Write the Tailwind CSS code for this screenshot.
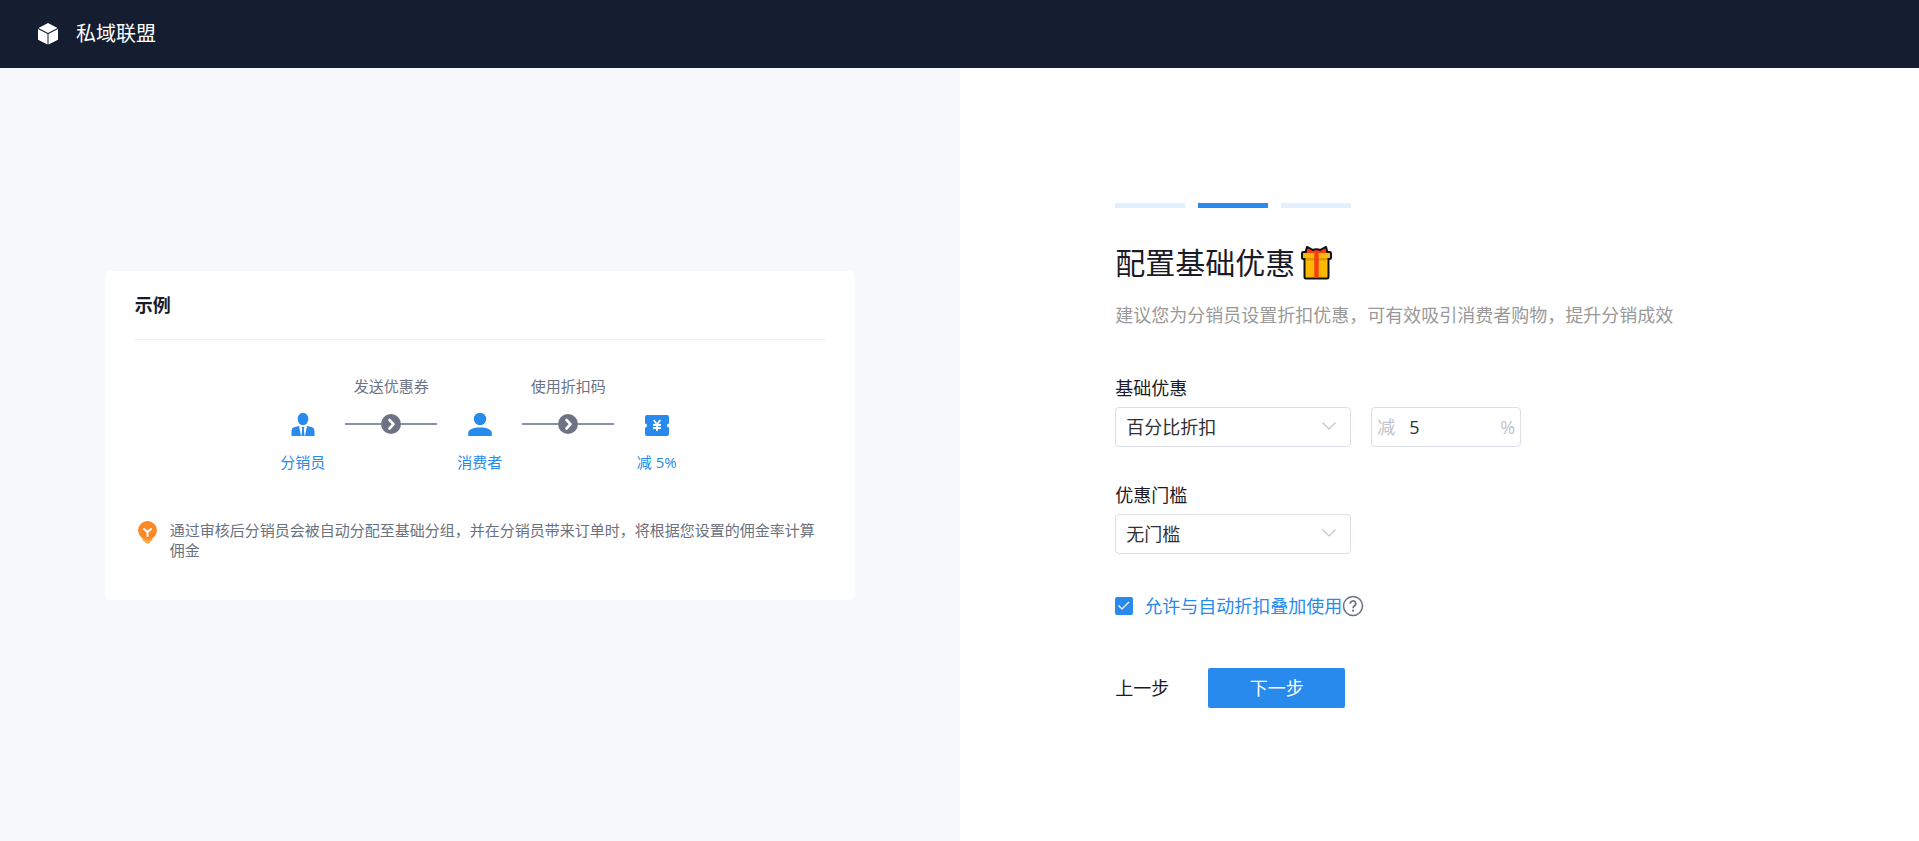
<!DOCTYPE html>
<html lang="zh-CN">
<head>
<meta charset="utf-8">
<meta name="viewport" content="width=device-width, initial-scale=1">
<title>私域联盟</title>
<script src="https://cdn.jsdelivr.net/npm/@tailwindcss/browser@4"></script>
</head>
<body class="flex min-h-screen flex-col bg-white font-['Open_Sans','Noto_Sans_CJK_SC',sans-serif] text-lg text-[#1b1b28]">

<header class="flex h-[68px] items-center gap-4 bg-[#151d31] px-9 text-white">
  <svg class="h-6 w-6" viewBox="0 0 24 24" fill="currentColor" aria-hidden="true">
    <path d="M12 1 21.500 6 12 10.900 2.500 6Z"/>
    <path d="M2 7.100 11.500 12V22.500L2 17.800Z"/>
    <path d="M22 7.100 12.500 12V22.500L22 17.800Z"/>
  </svg>
  <span class="text-xl">私域联盟</span>
</header>

<main class="grid flex-1 grid-cols-1 lg:grid-cols-2">
  <section class="bg-[#f6f8fc] px-6 pt-[203px] pb-12">
    <div class="mx-auto max-w-[750px] rounded-md bg-white px-[30px] pt-5 pb-10">
      <h2 class="border-b border-[#ebecef] pb-5 text-lg font-bold">示例</h2>

      <ol class="mt-9 flex justify-center gap-5 text-[15px] leading-5 text-[#288aec]">
        <li class="flex flex-col items-center pt-9">
          <svg class="h-6 w-6" viewBox="0 0 24 24" fill="currentColor" aria-hidden="true">
            <ellipse cx="12" cy="7" rx="5.300" ry="6.200"/>
            <path d="M7.800 14 3 15.300Q.5 16 .5 19.500V24H10L8 14Z"/>
            <path d="M16.200 14 21 15.300Q23.500 16 23.500 19.500V24H14L16 14Z"/>
            <path d="M10.500 15H13.500L12.800 17 13.600 24H10.400L11.200 17Z"/>
          </svg>
          <span class="mt-4">分销员</span>
        </li>
        <li class="flex w-[92px] flex-col items-center text-[#6b7385]">
          <span>发送优惠券</span>
          <span class="mt-[18px] flex w-full items-center">
            <span class="h-[2px] flex-1 bg-[#8b92a3]"></span>
            <svg class="h-5 w-5" viewBox="0 0 20 20" fill="none" aria-hidden="true"><circle cx="10" cy="10" r="10" fill="#6b7385"/><path d="M8.500 6 12.500 10.200 8.500 14.500" stroke="#fff" stroke-width="2.600" stroke-linecap="round" stroke-linejoin="round"/></svg>
            <span class="h-[2px] flex-1 bg-[#8b92a3]"></span>
          </span>
        </li>
        <li class="flex flex-col items-center pt-9">
          <svg class="h-6 w-6" viewBox="0 0 24 24" fill="currentColor" aria-hidden="true">
            <circle cx="12" cy="7" r="6.200"/>
            <path d="M.2 24.500V21C.2 17.500 5 15.500 12 15.500S23.800 17.500 23.800 21V24.500Z"/>
          </svg>
          <span class="mt-4">消费者</span>
        </li>
        <li class="flex w-[92px] flex-col items-center text-[#6b7385]">
          <span>使用折扣码</span>
          <span class="mt-[18px] flex w-full items-center">
            <span class="h-[2px] flex-1 bg-[#8b92a3]"></span>
            <svg class="h-5 w-5" viewBox="0 0 20 20" fill="none" aria-hidden="true"><circle cx="10" cy="10" r="10" fill="#6b7385"/><path d="M8.500 6 12.500 10.200 8.500 14.500" stroke="#fff" stroke-width="2.600" stroke-linecap="round" stroke-linejoin="round"/></svg>
            <span class="h-[2px] flex-1 bg-[#8b92a3]"></span>
          </span>
        </li>
        <li class="flex min-w-[45px] flex-col items-center pt-9">
          <svg class="h-6 w-6" viewBox="0 0 24 24" fill="none" aria-hidden="true">
            <path fill="currentColor" d="M2 3H22A2 2 0 0 1 24 5V11.500A2 2 0 0 0 24 15.500V22A2 2 0 0 1 22 24H2A2 2 0 0 1 0 22V15.500A2 2 0 0 0 0 11.500V5A2 2 0 0 1 2 3Z"/>
            <path stroke="#fff" stroke-width="1.800" d="M8.700 8 12 12.500 15.300 8M12 12.500V19M8 13H16M8 16H16"/>
          </svg>
          <span class="mt-4">减 5%</span>
        </li>
      </ol>

      <div class="mt-12 flex items-start gap-[13px] pl-[3px] text-[15px] leading-5 text-[#6b7280]">
        <svg class="h-6 w-[19px] shrink-0" viewBox="0 0 19 24" fill="none" aria-hidden="true">
          <path fill="#ffac48" d="M4.500 15H14.500V20Q14.500 21 13.500 21H13Q12.500 22 11.500 23Q9.500 24.500 7.500 23Q6.500 22 6 21H5.500Q4.500 21 4.500 20Z"/>
          <circle cx="9.500" cy="10.300" r="9.400" fill="#fb8926"/>
          <path stroke="#fff" stroke-width="2" stroke-linecap="round" stroke-linejoin="round" d="M6 9 9.500 12 13 9M9.500 12V16"/>
        </svg>
        <p>通过审核后分销员会被自动分配至基础分组，并在分销员带来订单时，将根据您设置的佣金率计算佣金</p>
      </div>
    </div>
  </section>

  <section class="px-6 pt-[135px] pb-12">
    <form class="mx-auto max-w-[648px]">
      <div class="flex gap-[13px]" role="progressbar" aria-label="步骤" aria-valuemin="1" aria-valuemax="3" aria-valuenow="2">
        <span class="h-[5px] w-[70px] bg-[#e2effd]"></span>
        <span class="h-[5px] w-[70px] bg-[#288aec]"></span>
        <span class="h-[5px] w-[70px] bg-[#e2effd]"></span>
      </div>

      <h1 class="mt-[35px] flex items-center gap-[6px] text-3xl leading-10">配置基础优惠
        <svg class="h-[34px] w-[31px]" viewBox="0 0 31 34" aria-hidden="true">
          <path d="M4 11H27.500V31Q27.500 32.500 26 32.500H5Q3.500 32.500 3.500 31V11Z" fill="#ffb700" stroke="#111" stroke-width="2"/>
          <path d="M4.500 6.500 6 1 11.500 4Q15.500 2.500 19.500 4L25 1 26.500 6.500Z" fill="#f53d18" stroke="#111" stroke-width="2" stroke-linejoin="round"/>
          <path d="M2.500 6H28.500Q30 6 30 7.500V11.500Q30 13 28.500 13H2.500Q1 13 1 11.500V7.500Q1 6 2.500 6Z" fill="#ffb700" stroke="#111" stroke-width="2"/>
          <path d="M4.500 12H26.500V14.500H4.500Z" fill="#d99a00"/>
          <path d="M5.500 7 7 2.500 12 5.200Q15.500 4 19 5.200L24 2.500 25.500 7Z" fill="#f53d18"/>
          <path d="M13.300 5H17.700V31.500H13.300Z" fill="#f53d18"/>
        </svg>
      </h1>
      <p class="mt-[18px] text-[#999]">建议您为分销员设置折扣优惠，可有效吸引消费者购物，提升分销成效</p>

      <label class="mt-[45px] block" for="discount-type">基础优惠</label>
      <div class="mt-[5px] flex gap-5">
        <div class="relative w-[236px]">
          <select id="discount-type" class="h-10 w-full appearance-none rounded border border-[#dcdfe6] bg-white px-[10px] text-[#303133]">
            <option>百分比折扣</option>
          </select>
          <svg class="pointer-events-none absolute top-3 right-[14px] h-4 w-4" viewBox="0 0 16 16" fill="none" stroke="#c0c4cc" stroke-width="1.200" aria-hidden="true"><path d="M1.500 3.500 8 10 14.500 3.500"/></svg>
        </div>
        <div class="flex h-10 w-[150px] items-center gap-[14px] rounded border border-[#dcdfe6] px-[5px] text-[#c0c4cc]">
          <label for="discount-value">减</label>
          <input id="discount-value" type="text" value="5" class="w-0 min-w-0 flex-1 bg-transparent text-[#303133] outline-none">
          <span>%</span>
        </div>
      </div>

      <label class="mt-[34px] block" for="threshold">优惠门槛</label>
      <div class="relative mt-[5px] w-[236px]">
        <select id="threshold" class="h-10 w-full appearance-none rounded border border-[#dcdfe6] bg-white px-[10px] text-[#303133]">
          <option>无门槛</option>
        </select>
        <svg class="pointer-events-none absolute top-3 right-[14px] h-4 w-4" viewBox="0 0 16 16" fill="none" stroke="#c0c4cc" stroke-width="1.200" aria-hidden="true"><path d="M1.500 3.500 8 10 14.500 3.500"/></svg>
      </div>

      <div class="mt-[38px] flex items-center">
        <label class="flex items-center gap-[11px] text-[#288aec]">
          <span class="grid h-[18px] w-[18px]">
            <input type="checkbox" checked class="col-start-1 row-start-1 h-[18px] w-[18px] appearance-none rounded-xs bg-[#288aec]">
            <svg class="pointer-events-none col-start-1 row-start-1 h-[18px] w-[18px]" viewBox="0 0 18 18" fill="none" stroke="#fff" stroke-width="1.200" aria-hidden="true"><path d="M3.500 8.500 7 12 14 5"/></svg>
          </span>
          允许与自动折扣叠加使用
        </label>
        <button type="button" aria-label="帮助">
          <svg class="block h-[22px] w-[22px]" viewBox="0 0 22 22" fill="none" stroke="#6b7280" stroke-width="1.500" aria-hidden="true"><circle cx="11" cy="11" r="9.500"/><path stroke-width="1.700" d="M8.300 8.800A2.700 2.700 0 1 1 12.300 11Q11 11.800 11 13.300"/><circle cx="11" cy="15.700" r="1.100" fill="#6b7280" stroke="none"/></svg>
        </button>
      </div>

      <div class="mt-12 flex gap-[39px]">
        <button type="button" class="h-10">上一步</button>
        <button type="submit" class="h-10 w-[137px] rounded-xs bg-[#288aec] text-white">下一步</button>
      </div>
    </form>
  </section>
</main>
</body>
</html>
